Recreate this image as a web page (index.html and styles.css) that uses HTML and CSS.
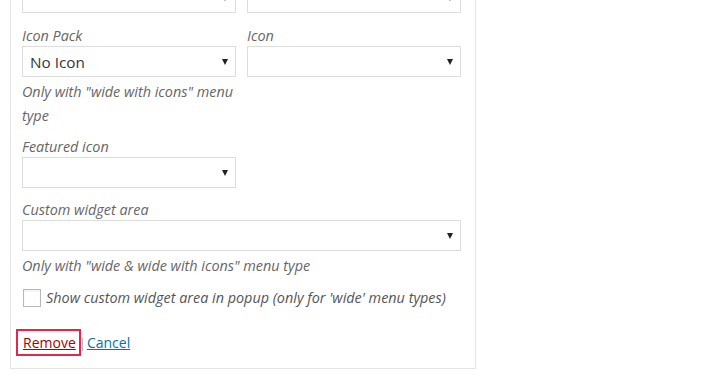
FILE: index.html
```html
<!DOCTYPE html>
<html>
<head>
  <meta charset="utf-8">
  <title>Menu item settings</title>

  <link rel="stylesheet" href="styles.css">
</head>

<body>
  <div class="menu-item-settings">
    <div class="field-row">
      <div class="field">
        <div class="select"><span class="select-value"></span><svg class="caret" width="6" height="6" viewBox="0 0 6 6"><polygon points="0,0 6,0 3,6" /></svg></div>
      </div>
      <div class="field">
        <div class="select"><span class="select-value"></span><svg class="caret" width="6" height="6" viewBox="0 0 6 6"><polygon points="0,0 6,0 3,6" /></svg></div>
      </div>
    </div>

    <div class="field-row field-row-icons">
      <div class="field">
        <label class="field-label">Icon Pack</label>
        <div class="select"><span class="select-value">No Icon</span><svg class="caret" width="6" height="6" viewBox="0 0 6 6"><polygon points="0,0 6,0 3,6" /></svg></div>
        <p class="description">Only with "wide with icons" menu type</p>
      </div>
      <div class="field">
        <label class="field-label">Icon</label>
        <div class="select"><span class="select-value"></span><svg class="caret" width="6" height="6" viewBox="0 0 6 6"><polygon points="0,0 6,0 3,6" /></svg></div>
      </div>
    </div>

    <div class="field">
      <label class="field-label">Featured icon</label>
      <div class="select"><span class="select-value"></span><svg class="caret" width="6" height="6" viewBox="0 0 6 6"><polygon points="0,0 6,0 3,6" /></svg></div>
    </div>

    <div class="field field-wide">
      <label class="field-label">Custom widget area</label>
      <div class="select"><span class="select-value"></span><svg class="caret" width="6" height="6" viewBox="0 0 6 6"><polygon points="0,0 6,0 3,6" /></svg></div>
      <p class="description">Only with "wide &amp; wide with icons" menu type</p>
    </div>

    <label class="checkbox-row">
      <span class="checkbox"></span>
      <span class="checkbox-text">Show custom widget area in popup (only for 'wide' menu types)</span>
    </label>

    <div class="item-actions">
      <a href="#" class="item-delete">Remove</a>
      <span class="sep">|</span>
      <a href="#" class="item-cancel">Cancel</a>
    </div>
  </div>
</body>
</html>
```

FILE: styles.css
```css
body {
  font-family: "Open Sans", sans-serif;
  background-color: #fff;
  color: #444;
  margin: 0;
  padding: 0;
}

.menu-item-settings {
  width: 440px;
  margin: -30px 0 0 10px;
  padding: 12px 13px 12px 11px;
  border: 1px solid #e5e5e5;
  border-top: none;
  box-shadow: 0 1px 1px rgba(0, 0, 0, 0.04);
}

.field-row {
  display: flex;
  gap: 11px;
  margin-bottom: 13px;
}

.field-row-icons {
  margin-bottom: 9px;
}

.field {
  width: 214px;
}

.field-wide {
  width: 439px;
  margin-top: 12px;
}

.field-label {
  display: block;
  height: 20px;
  line-height: 20px;
  font-size: 14.4px;
  font-style: italic;
  color: #666;
}

.select {
  display: flex;
  align-items: center;
  justify-content: space-between;
  box-sizing: border-box;
  height: 31px;
  padding: 0 7px 0 7px;
  border: 1px solid #ddd;
  background-color: #fff;
}

.select-value {
  font-size: 15.3px;
  color: #32373c;
}

.caret {
  fill: #222;
}

.description {
  margin: 3px 0 0 0;
  line-height: 24px;
  font-size: 14.4px;
  font-style: italic;
  color: #666;
}

.checkbox-row {
  display: flex;
  align-items: center;
  gap: 5px;
  margin-top: 10px;
}

.checkbox {
  box-sizing: border-box;
  width: 18px;
  height: 18px;
  margin-left: 1px;
  border: 1px solid #b4b9be;
  background-color: #fff;
  box-shadow: inset 0 1px 2px rgba(0, 0, 0, 0.07);
}

.checkbox-text {
  font-size: 14.4px;
  font-style: italic;
  color: #555;
}

.item-actions {
  display: flex;
  align-items: center;
  gap: 1px;
  margin: 22px 0 0 -6px;
  font-size: 14px;
}

.item-actions a {
  line-height: 19px;
}

.item-delete {
  padding: 2px 3px 2px 5px;
  border: 2px solid #dc2a4c;
  color: #a00;
}

.sep {
  color: #8ab;
  margin-left: -3px;
  font-size: 13px;
}

.item-cancel {
  color: #0073aa;
}
```
